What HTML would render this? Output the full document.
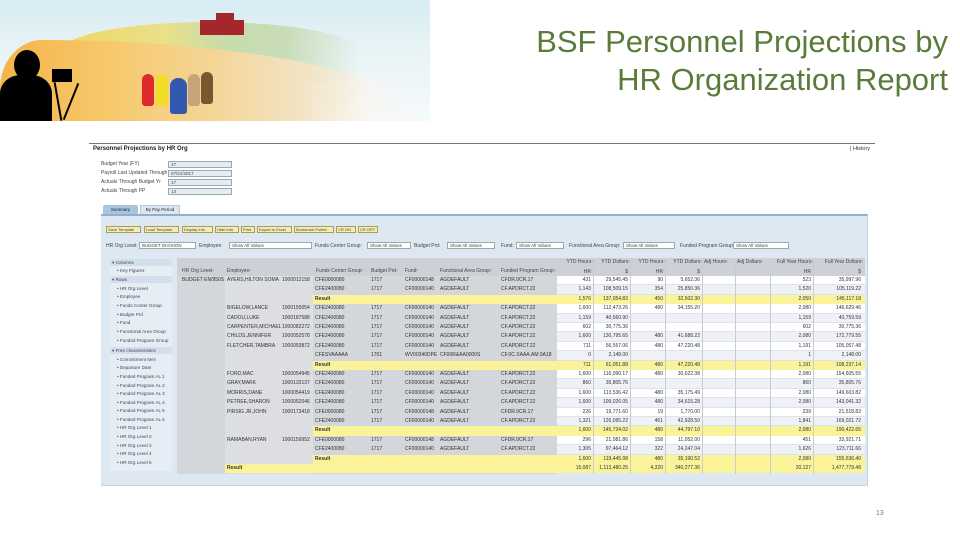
<!DOCTYPE html>
<html><head><meta charset="utf-8"><style>
*{margin:0;padding:0;box-sizing:border-box}
body{width:960px;height:540px;position:relative;background:#fff;font-family:"Liberation Sans",sans-serif;overflow:hidden}
.a{position:absolute}
.t{position:absolute;font-size:5px;color:#444;white-space:nowrap;line-height:8px}
.title{position:absolute;right:12px;font-size:31px;color:#5b7b3b;white-space:nowrap;text-align:right;line-height:38px}
.row{position:absolute;left:177px;width:688px;height:9.4px;font-size:5px;color:#333;line-height:9.4px}
.row span{position:absolute;white-space:nowrap}
.n{background:#fff;position:absolute;left:380px;width:308px;height:9.4px;border-bottom:1px solid #dfe3e8}
.row.alt .n{background:#eef2f7}
.row.res .y{position:absolute;left:136px;width:552px;height:9.4px;background:#faf39a}
.row.fin .y{position:absolute;left:48px;width:640px;height:9.4px;background:#faf39a}
.r{text-align:right}
.btn{position:absolute;top:226px;height:7px;background:#f3eeb0;border:1px solid #a89d5a;font-size:4px;line-height:5px;color:#444;padding:0 1px;white-space:nowrap}
.sel{position:absolute;height:7px;background:#fff;border:1px solid #9aa;font-size:4.5px;line-height:5px;color:#444;padding-left:2px;white-space:nowrap}
.nav{position:absolute;left:112px;font-size:4.6px;color:#445;white-space:nowrap}
</style></head><body>
<!-- banner -->
<div class="a" style="left:0;top:0;width:430px;height:121px;background:linear-gradient(180deg,#d6ecf3 0%,#e8f3f5 40%,#f6fafb 100%)"></div>
<div class="a" style="left:60px;top:22px;width:300px;height:60px;background:linear-gradient(90deg,#f0d860 0%,#e9e08a 35%,#c6dcaa 55%,#c8ddb8 75%,rgba(240,246,240,0) 100%);border-radius:50% 50% 0 0"></div>
<div class="a" style="left:0;top:40px;width:420px;height:81px;background:linear-gradient(90deg,#f4b34a 0%,#f7c86a 25%,#f4d595 50%,#f3e2c0 70%,rgba(250,246,240,0.6) 88%,rgba(255,255,255,0) 100%);border-top-left-radius:10% 60%;border-top-right-radius:90% 100%"></div>
<div class="a" style="left:200px;top:20px;width:44px;height:15px;background:#a5262b"></div>
<div class="a" style="left:216px;top:13px;width:18px;height:8px;background:#a5262b"></div>
<div class="a" style="left:140px;top:72px;width:84px;height:44px">
<div class="a" style="left:2px;top:2px;width:12px;height:32px;background:#e02a2a;border-radius:6px 6px 3px 3px"></div>
<div class="a" style="left:16px;top:2px;width:12px;height:32px;background:#f2dc2a;border-radius:6px 6px 3px 3px"></div>
<div class="a" style="left:48px;top:2px;width:12px;height:32px;background:#c9a27a;border-radius:6px 6px 3px 3px"></div>
<div class="a" style="left:61px;top:0;width:12px;height:32px;background:#7a5630;border-radius:6px 6px 3px 3px"></div>
<div class="a" style="left:30px;top:6px;width:17px;height:36px;background:#3258b0;border-radius:8px 8px 3px 3px"></div>
</div>
<div class="a" style="left:14px;top:50px;width:26px;height:30px;background:#000;border-radius:50%"></div>
<div class="a" style="left:0;top:75px;width:52px;height:46px;background:#000;border-radius:40% 40% 0 0"></div>
<div class="a" style="left:52px;top:69px;width:20px;height:13px;background:#000"></div>
<div class="a" style="left:57px;top:82px;width:2px;height:39px;background:#000;transform:rotate(-10deg)"></div>
<div class="a" style="left:70px;top:82px;width:2px;height:39px;background:#000;transform:rotate(22deg)"></div>

<div class="title" style="top:23px">BSF Personnel Projections by</div>
<div class="title" style="top:61px">HR Organization Report</div>
<div class="t" style="left:876px;top:510px;font-size:7px;color:#777">13</div>

<!-- screenshot -->
<div class="a" style="left:89px;top:143px;width:786px;height:1px;background:#777"></div>
<div class="t" style="left:93px;top:145px;font-size:6px;font-weight:bold;color:#222">Personnel Projections by HR Org</div>
<div class="t" style="left:850px;top:145px;font-size:5.5px;color:#333">| History</div>
<div class="t" style="left:101px;top:160px">Budget Year (FY)</div>
<div class="t" style="left:101px;top:169px">Payroll Last Updated Through</div>
<div class="t" style="left:101px;top:178px">Actuals Through Budget Yr</div>
<div class="t" style="left:101px;top:187px">Actuals Through PP</div>
<div class="sel" style="left:168px;top:161px;width:64px;background:#e5ecf3">17</div>
<div class="sel" style="left:168px;top:170px;width:64px;background:#e5ecf3">07/21/2017</div>
<div class="sel" style="left:168px;top:179px;width:64px;background:#e5ecf3">17</div>
<div class="sel" style="left:168px;top:188px;width:64px;background:#e5ecf3">13</div>

<div class="a" style="left:103px;top:205px;width:35px;height:10px;background:#a9c4dd;border-radius:2px 2px 0 0;font-size:4.5px;line-height:10px;text-align:center;color:#223">Summary</div>
<div class="a" style="left:140px;top:205px;width:40px;height:10px;background:#dbe6f0;border:1px solid #b9c9d9;font-size:4.5px;line-height:8px;text-align:center;color:#223">By Pay Period</div>
<div class="a" style="left:101px;top:214px;width:767px;height:272px;background:#dde8f2;border-top:2px solid #8fb0d0;border-right:1px solid #c5d3e0;border-bottom:1px solid #c5d3e0"></div>

<div class="btn" style="left:106px;width:35px">Save Template</div>
<div class="btn" style="left:144px;width:35px">Load Template</div>
<div class="btn" style="left:182px;width:31px">Display Info</div>
<div class="btn" style="left:215px;width:24px">Hide Info</div>
<div class="btn" style="left:241px;width:14px">Print</div>
<div class="btn" style="left:257px;width:35px">Export to Excel</div>
<div class="btn" style="left:294px;width:40px">Bookmark Portlet</div>
<div class="btn" style="left:336px;width:20px">CR ON</div>
<div class="btn" style="left:358px;width:20px">CR OFF</div>

<div class="t" style="left:106px;top:242px">HR Org Level:</div>
<div class="sel" style="left:139px;top:242px;width:57px">BUDGET DIVISION</div>
<div class="t" style="left:199px;top:242px">Employee:</div>
<div class="sel" style="left:229px;top:242px;width:83px">Show All Values</div>
<div class="t" style="left:315px;top:242px">Funds Center Group:</div>
<div class="sel" style="left:367px;top:242px;width:44px">Show All Values</div>
<div class="t" style="left:414px;top:242px">Budget Prd:</div>
<div class="sel" style="left:447px;top:242px;width:48px">Show All Values</div>
<div class="t" style="left:501px;top:242px">Fund:</div>
<div class="sel" style="left:516px;top:242px;width:48px">Show All Values</div>
<div class="t" style="left:569px;top:242px">Functional Area Group:</div>
<div class="sel" style="left:623px;top:242px;width:52px">Show All Values</div>
<div class="t" style="left:680px;top:242px">Funded Program Group:</div>
<div class="sel" style="left:733px;top:242px;width:56px">Show All Values</div>

<!-- nav -->
<div class="a" style="left:110px;top:259px;width:62px;height:212px;background:#e6edf5"></div>
<div class="a" style="left:110px;top:259px;width:62px;height:7px;background:#d3dfec"></div>
<div class="a" style="left:110px;top:276px;width:62px;height:7px;background:#d3dfec"></div>
<div class="a" style="left:110px;top:347px;width:62px;height:7px;background:#d3dfec"></div>
<div class="nav" style="top:260px">▾ Columns</div>
<div class="nav" style="top:268px;left:117px">• Key Figures</div>
<div class="nav" style="top:277px">▾ Rows</div>
<div class="nav" style="top:286px;left:117px">• HR Org Level</div>
<div class="nav" style="top:294px;left:117px">• Employee</div>
<div class="nav" style="top:303px;left:117px">• Funds Center Group</div>
<div class="nav" style="top:312px;left:117px">• Budget Prd</div>
<div class="nav" style="top:320px;left:117px">• Fund</div>
<div class="nav" style="top:329px;left:117px">• Functional Area Group</div>
<div class="nav" style="top:338px;left:117px">• Funded Program Group</div>
<div class="nav" style="top:348px">▾ Free characteristics</div>
<div class="nav" style="top:357px;left:117px">• Commitment Item</div>
<div class="nav" style="top:365px;left:117px">• Departure Date</div>
<div class="nav" style="top:374px;left:117px">• Funded Program AL 1</div>
<div class="nav" style="top:383px;left:117px">• Funded Program AL 2</div>
<div class="nav" style="top:391px;left:117px">• Funded Program AL 3</div>
<div class="nav" style="top:400px;left:117px">• Funded Program AL 4</div>
<div class="nav" style="top:408px;left:117px">• Funded Program AL 5</div>
<div class="nav" style="top:417px;left:117px">• Funded Program AL 6</div>
<div class="nav" style="top:425px;left:117px">• HR Org Level 1</div>
<div class="nav" style="top:434px;left:117px">• HR Org Level 2</div>
<div class="nav" style="top:443px;left:117px">• HR Org Level 3</div>
<div class="nav" style="top:451px;left:117px">• HR Org Level 4</div>
<div class="nav" style="top:460px;left:117px">• HR Org Level 5</div>

<!-- table -->
<div class="a" style="left:177px;top:258px;width:688px;height:18px;background:#cdd1d6"></div>
<div class="a" style="left:177px;top:276px;width:380px;height:198px;background:#d3d6da"></div>
<div class="a" style="left:225px;top:276px;width:88px;height:198px;background:#dcdee1"></div>
<div class="t" style="left:182px;top:267px">HR Org Level▫</div>
<div class="t" style="left:227px;top:267px">Employee▫</div>
<div class="t" style="left:316px;top:267px">Funds Center Group▫</div>
<div class="t" style="left:371px;top:267px">Budget Prd▫</div>
<div class="t" style="left:405px;top:267px">Fund▫</div>
<div class="t" style="left:440px;top:267px">Functional Area Group▫</div>
<div class="t" style="left:501px;top:267px">Funded Program Group▫</div>
<div class="t r" style="left:557px;top:258px;width:36px">YTD Hours▫</div>
<div class="t r" style="left:593px;top:258px;width:37px">YTD Dollars▫</div>
<div class="t r" style="left:630px;top:258px;width:35px">YTD Hours▫</div>
<div class="t r" style="left:665px;top:258px;width:37px">YTD Dollars▫</div>
<div class="t" style="left:704px;top:258px">Adj Hours▫</div>
<div class="t" style="left:737px;top:258px">Adj Dollars▫</div>
<div class="t r" style="left:770px;top:258px;width:43px">Full Year Hours▫</div>
<div class="t r" style="left:813px;top:258px;width:50px">Full Year Dollars▫</div>
<div class="t r" style="left:557px;top:268px;width:34px">HR</div>
<div class="t r" style="left:593px;top:268px;width:35px">$</div>
<div class="t r" style="left:630px;top:268px;width:33px">HR</div>
<div class="t r" style="left:665px;top:268px;width:35px">$</div>
<div class="t r" style="left:770px;top:268px;width:41px">HR</div>
<div class="t r" style="left:813px;top:268px;width:48px">$</div>

<div id="rows">
<div class="row" style="top:276px"><div class="n"></div><span style="left:5px">BUDGET EN/950S</span><span style="left:50px">AYERS,HILTON SOMA</span><span style="left:105px">1000012158</span><span style="left:138px">CFE0000080</span><span style="left:194px">1717</span><span style="left:228px">CF00000148</span><span style="left:263px">AGDEFAULT</span><span style="left:324px">CFDR.0CR.17</span><span class="r" style="left:380px;width:34px">431</span><span class="r" style="left:416px;width:35px">29,545.45</span><span class="r" style="left:453px;width:33px">90</span><span class="r" style="left:488px;width:35px">5,652.36</span><span class="r" style="left:593px;width:41px">523</span><span class="r" style="left:636px;width:48px">35,997.96</span></div>
<div class="row alt" style="top:285.4px"><div class="n"></div><span style="left:138px">CFE2400080</span><span style="left:194px">1717</span><span style="left:228px">CF00000140</span><span style="left:263px">AGDEFAULT</span><span style="left:324px">CF.APDRCT.22</span><span class="r" style="left:380px;width:34px">1,143</span><span class="r" style="left:416px;width:35px">108,509.15</span><span class="r" style="left:453px;width:33px">354</span><span class="r" style="left:488px;width:35px">25,850.36</span><span class="r" style="left:593px;width:41px">1,520</span><span class="r" style="left:636px;width:48px">105,119.22</span></div>
<div class="row res" style="top:294.8px"><div class="y"></div><span style="left:138px;font-weight:bold">Result</span><span class="r" style="left:380px;width:34px">1,576</span><span class="r" style="left:416px;width:35px">137,054.83</span><span class="r" style="left:453px;width:33px">450</span><span class="r" style="left:488px;width:35px">32,502.30</span><span class="r" style="left:593px;width:41px">2,050</span><span class="r" style="left:636px;width:48px">145,117.18</span></div>
<div class="row" style="top:304.2px"><div class="n"></div><span style="left:50px">BIGELOW,LANCE</span><span style="left:105px">1000155054</span><span style="left:138px">CFE2400080</span><span style="left:194px">1717</span><span style="left:228px">CF00000140</span><span style="left:263px">AGDEFAULT</span><span style="left:324px">CF.APDRCT.22</span><span class="r" style="left:380px;width:34px">1,600</span><span class="r" style="left:416px;width:35px">112,473.26</span><span class="r" style="left:453px;width:33px">480</span><span class="r" style="left:488px;width:35px">34,155.20</span><span class="r" style="left:593px;width:41px">2,080</span><span class="r" style="left:636px;width:48px">146,629.46</span></div>
<div class="row alt" style="top:313.6px"><div class="n"></div><span style="left:50px">CADOU,LUKE</span><span style="left:105px">1000187588</span><span style="left:138px">CFE2400080</span><span style="left:194px">1717</span><span style="left:228px">CF00000140</span><span style="left:263px">AGDEFAULT</span><span style="left:324px">CF.APDRCT.22</span><span class="r" style="left:380px;width:34px">1,159</span><span class="r" style="left:416px;width:35px">40,560.90</span><span class="r" style="left:593px;width:41px">1,159</span><span class="r" style="left:636px;width:48px">40,759.59</span></div>
<div class="row" style="top:323px"><div class="n"></div><span style="left:50px">CARPENTER,MICHAEL</span><span style="left:105px">1000082272</span><span style="left:138px">CFE2400080</span><span style="left:194px">1717</span><span style="left:228px">CF00000140</span><span style="left:263px">AGDEFAULT</span><span style="left:324px">CF.APDRCT.22</span><span class="r" style="left:380px;width:34px">602</span><span class="r" style="left:416px;width:35px">30,775.36</span><span class="r" style="left:593px;width:41px">602</span><span class="r" style="left:636px;width:48px">30,775.36</span></div>
<div class="row alt" style="top:332.4px"><div class="n"></div><span style="left:50px">CHILDS,JENNIFER</span><span style="left:105px">1000052578</span><span style="left:138px">CFE2400080</span><span style="left:194px">1717</span><span style="left:228px">CF00000140</span><span style="left:263px">AGDEFAULT</span><span style="left:324px">CF.APDRCT.22</span><span class="r" style="left:380px;width:34px">1,600</span><span class="r" style="left:416px;width:35px">130,795.65</span><span class="r" style="left:453px;width:33px">480</span><span class="r" style="left:488px;width:35px">41,688.22</span><span class="r" style="left:593px;width:41px">2,080</span><span class="r" style="left:636px;width:48px">172,779.55</span></div>
<div class="row" style="top:341.8px"><div class="n"></div><span style="left:50px">FLETCHER,TAMBRA</span><span style="left:105px">1000053872</span><span style="left:138px">CFE2400080</span><span style="left:194px">1717</span><span style="left:228px">CF00000140</span><span style="left:263px">AGDEFAULT</span><span style="left:324px">CF.APDRCT.22</span><span class="r" style="left:380px;width:34px">711</span><span class="r" style="left:416px;width:35px">56,557.06</span><span class="r" style="left:453px;width:33px">480</span><span class="r" style="left:488px;width:35px">47,220.48</span><span class="r" style="left:593px;width:41px">1,191</span><span class="r" style="left:636px;width:48px">105,057.48</span></div>
<div class="row alt" style="top:351.2px"><div class="n"></div><span style="left:138px">CFESVAAAAA</span><span style="left:194px">1701</span><span style="left:228px">WV00340DPE</span><span style="left:263px">CF00R&amp;AA0000S</span><span style="left:324px">CF.0C.XAAA.AM.9A18</span><span class="r" style="left:380px;width:34px">0</span><span class="r" style="left:416px;width:35px">2,148.00</span><span class="r" style="left:593px;width:41px">1</span><span class="r" style="left:636px;width:48px">2,148.00</span></div>
<div class="row res" style="top:360.6px"><div class="y"></div><span style="left:138px;font-weight:bold">Result</span><span class="r" style="left:380px;width:34px">711</span><span class="r" style="left:416px;width:35px">61,051.88</span><span class="r" style="left:453px;width:33px">480</span><span class="r" style="left:488px;width:35px">47,220.48</span><span class="r" style="left:593px;width:41px">1,191</span><span class="r" style="left:636px;width:48px">108,237.14</span></div>
<div class="row" style="top:370px"><div class="n"></div><span style="left:50px">FORD,MAC</span><span style="left:105px">1000054945</span><span style="left:138px">CFE2400080</span><span style="left:194px">1717</span><span style="left:228px">CF00000140</span><span style="left:263px">AGDEFAULT</span><span style="left:324px">CF.APDRCT.22</span><span class="r" style="left:380px;width:34px">1,600</span><span class="r" style="left:416px;width:35px">116,090.17</span><span class="r" style="left:453px;width:33px">480</span><span class="r" style="left:488px;width:35px">30,622.38</span><span class="r" style="left:593px;width:41px">2,080</span><span class="r" style="left:636px;width:48px">154,605.55</span></div>
<div class="row alt" style="top:379.4px"><div class="n"></div><span style="left:50px">GRAY,MARK</span><span style="left:105px">1000133137</span><span style="left:138px">CFE2400080</span><span style="left:194px">1717</span><span style="left:228px">CF00000140</span><span style="left:263px">AGDEFAULT</span><span style="left:324px">CF.APDRCT.22</span><span class="r" style="left:380px;width:34px">860</span><span class="r" style="left:416px;width:35px">35,805.76</span><span class="r" style="left:593px;width:41px">860</span><span class="r" style="left:636px;width:48px">35,805.76</span></div>
<div class="row" style="top:388.8px"><div class="n"></div><span style="left:50px">MORRIS,DANE</span><span style="left:105px">1000054419</span><span style="left:138px">CFE2400080</span><span style="left:194px">1717</span><span style="left:228px">CF00000140</span><span style="left:263px">AGDEFAULT</span><span style="left:324px">CF.APDRCT.22</span><span class="r" style="left:380px;width:34px">1,600</span><span class="r" style="left:416px;width:35px">113,536.42</span><span class="r" style="left:453px;width:33px">480</span><span class="r" style="left:488px;width:35px">35,175.49</span><span class="r" style="left:593px;width:41px">2,080</span><span class="r" style="left:636px;width:48px">149,603.82</span></div>
<div class="row alt" style="top:398.2px"><div class="n"></div><span style="left:50px">PETREE,SHARON</span><span style="left:105px">1000052046</span><span style="left:138px">CFE2400080</span><span style="left:194px">1717</span><span style="left:228px">CF00000140</span><span style="left:263px">AGDEFAULT</span><span style="left:324px">CF.APDRCT.22</span><span class="r" style="left:380px;width:34px">1,600</span><span class="r" style="left:416px;width:35px">109,026.05</span><span class="r" style="left:453px;width:33px">480</span><span class="r" style="left:488px;width:35px">34,615.28</span><span class="r" style="left:593px;width:41px">2,080</span><span class="r" style="left:636px;width:48px">143,041.32</span></div>
<div class="row" style="top:407.6px"><div class="n"></div><span style="left:50px">PIRSIG JR,JOHN</span><span style="left:105px">1000173418</span><span style="left:138px">CFE0000080</span><span style="left:194px">1717</span><span style="left:228px">CF00000148</span><span style="left:263px">AGDEFAULT</span><span style="left:324px">CFDR.0CR.17</span><span class="r" style="left:380px;width:34px">226</span><span class="r" style="left:416px;width:35px">19,771.60</span><span class="r" style="left:453px;width:33px">19</span><span class="r" style="left:488px;width:35px">1,770.00</span><span class="r" style="left:593px;width:41px">239</span><span class="r" style="left:636px;width:48px">21,518.82</span></div>
<div class="row alt" style="top:417px"><div class="n"></div><span style="left:138px">CFE2400080</span><span style="left:194px">1717</span><span style="left:228px">CF00000140</span><span style="left:263px">AGDEFAULT</span><span style="left:324px">CF.APDRCT.22</span><span class="r" style="left:380px;width:34px">1,321</span><span class="r" style="left:416px;width:35px">126,095.22</span><span class="r" style="left:453px;width:33px">461</span><span class="r" style="left:488px;width:35px">42,928.50</span><span class="r" style="left:593px;width:41px">1,841</span><span class="r" style="left:636px;width:48px">169,021.72</span></div>
<div class="row res" style="top:426.4px"><div class="y"></div><span style="left:138px;font-weight:bold">Result</span><span class="r" style="left:380px;width:34px">1,600</span><span class="r" style="left:416px;width:35px">145,734.02</span><span class="r" style="left:453px;width:33px">480</span><span class="r" style="left:488px;width:35px">44,797.10</span><span class="r" style="left:593px;width:41px">2,080</span><span class="r" style="left:636px;width:48px">190,422.65</span></div>
<div class="row" style="top:435.8px"><div class="n"></div><span style="left:50px">RAMABAN,RYAN</span><span style="left:105px">1000159952</span><span style="left:138px">CFE0000080</span><span style="left:194px">1717</span><span style="left:228px">CF00000148</span><span style="left:263px">AGDEFAULT</span><span style="left:324px">CFDR.0CR.17</span><span class="r" style="left:380px;width:34px">296</span><span class="r" style="left:416px;width:35px">21,081.86</span><span class="r" style="left:453px;width:33px">158</span><span class="r" style="left:488px;width:35px">11,052.00</span><span class="r" style="left:593px;width:41px">451</span><span class="r" style="left:636px;width:48px">33,921.71</span></div>
<div class="row alt" style="top:445.2px"><div class="n"></div><span style="left:138px">CFE2400080</span><span style="left:194px">1717</span><span style="left:228px">CF00000140</span><span style="left:263px">AGDEFAULT</span><span style="left:324px">CF.APDRCT.22</span><span class="r" style="left:380px;width:34px">1,305</span><span class="r" style="left:416px;width:35px">97,464.12</span><span class="r" style="left:453px;width:33px">322</span><span class="r" style="left:488px;width:35px">24,247.04</span><span class="r" style="left:593px;width:41px">1,626</span><span class="r" style="left:636px;width:48px">123,711.66</span></div>
<div class="row res" style="top:454.6px"><div class="y"></div><span style="left:138px;font-weight:bold">Result</span><span class="r" style="left:380px;width:34px">1,600</span><span class="r" style="left:416px;width:35px">119,445.98</span><span class="r" style="left:453px;width:33px">480</span><span class="r" style="left:488px;width:35px">35,190.52</span><span class="r" style="left:593px;width:41px">2,080</span><span class="r" style="left:636px;width:48px">155,636.40</span></div>
<div class="row fin" style="top:464px"><div class="y"></div><span style="left:50px;font-weight:bold">Result</span><span class="r" style="left:380px;width:34px">15,087</span><span class="r" style="left:416px;width:35px">1,113,480.25</span><span class="r" style="left:453px;width:33px">4,320</span><span class="r" style="left:488px;width:35px">340,277.36</span><span class="r" style="left:593px;width:41px">20,127</span><span class="r" style="left:636px;width:48px">1,477,779.48</span></div>
</div>
<!-- column lines -->
<div class="a" style="left:593px;top:258px;width:1px;height:216px;background:#c8ccd2"></div>
<div class="a" style="left:630px;top:258px;width:1px;height:216px;background:#c8ccd2"></div>
<div class="a" style="left:665px;top:258px;width:1px;height:216px;background:#c8ccd2"></div>
<div class="a" style="left:702px;top:258px;width:1px;height:216px;background:#c8ccd2"></div>
<div class="a" style="left:735px;top:258px;width:1px;height:216px;background:#c8ccd2"></div>
<div class="a" style="left:770px;top:258px;width:1px;height:216px;background:#c8ccd2"></div>
<div class="a" style="left:813px;top:258px;width:1px;height:216px;background:#c8ccd2"></div>
</body></html>
